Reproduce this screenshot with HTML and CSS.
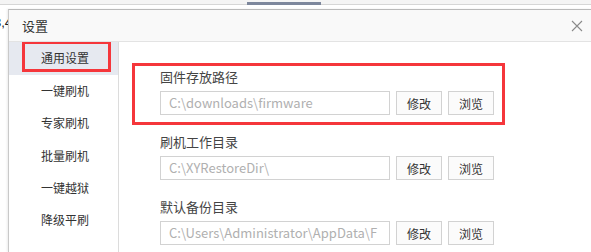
FILE: index.html
```html
<!DOCTYPE html>
<html lang="zh-CN">
<head>
<meta charset="UTF-8">
<title>设置</title>
<link rel="stylesheet" href="styles.css">
</head>
<body>
    <div class="backdrop">
        <div class="backdrop-tab"></div>
    </div>
    <div class="page">
        <div class="gutter"><span class="gutter-text">3,4</span></div>
        <div class="dialog">
            <div class="titlebar">
                <span class="title">设置</span>
                <svg class="close" width="12" height="12" viewBox="0 0 12 12">
                    <path d="M1 1 L11 11 M11 1 L1 11" stroke="#8a8a8a" stroke-width="1.1" fill="none"/>
                </svg>
            </div>
            <div class="dialog-body">
                <ul class="sidebar">
                    <li class="nav-item active">通用设置<span class="mark mark-nav"></span></li>
                    <li class="nav-item">一键刷机</li>
                    <li class="nav-item">专家刷机</li>
                    <li class="nav-item">批量刷机</li>
                    <li class="nav-item">一键越狱</li>
                    <li class="nav-item">降级平刷</li>
                </ul>
                <div class="content">
                    <div class="group">
                        <span class="mark mark-group"></span>
                        <div class="label">固件存放路径</div>
                        <div class="row">
                            <div class="path">C:\downloads\firmware</div>
                            <button class="btn">修改</button>
                            <button class="btn">浏览</button>
                        </div>
                    </div>
                    <div class="group">
                        <div class="label">刷机工作目录</div>
                        <div class="row">
                            <div class="path">C:\XYRestoreDir\</div>
                            <button class="btn">修改</button>
                            <button class="btn">浏览</button>
                        </div>
                    </div>
                    <div class="group">
                        <div class="label">默认备份目录</div>
                        <div class="row">
                            <div class="path">C:\Users\Administrator\AppData\F</div>
                            <button class="btn">修改</button>
                            <button class="btn">浏览</button>
                        </div>
                    </div>
                </div>
            </div>
        </div>
    </div>
</body>
</html>
```

FILE: styles.css
```css
body {
    margin: 0;
    background: white;
    width: 591px;
    height: 252px;
    overflow: hidden;
    font-family: "Noto Sans CJK SC", "Liberation Sans", sans-serif;
    color: #333;
}

.backdrop {
    height: 4px;
    background: #f4f4f4;
    border-bottom: 1px solid #d6d6d6;
    position: relative;
}

.backdrop-tab {
    position: absolute;
    left: 247px;
    top: 2px;
    width: 74px;
    height: 3px;
    background: #7d879c;
}

.page {
    display: flex;
    height: 247px;
}

.gutter {
    width: 8px;
    overflow: hidden;
    background: #fff;
}

.gutter-text {
    display: block;
    margin-top: 10px;
    margin-left: -6px;
    font-size: 13px;
    line-height: 16px;
    color: #222;
    font-family: "Liberation Sans", sans-serif;
}

.dialog {
    flex: 1;
    margin-top: 4px;
    border-left: 1px solid #c9c9c9;
    border-top: 1px solid #b9b9b9;
    box-shadow: -1px 0 2px rgba(0,0,0,0.08);
    background: #fff;
    display: flex;
    flex-direction: column;
    min-height: 0;
}

.titlebar {
    flex-shrink: 0;
    height: 31px;
    background: #f9f9f9;
    border-bottom: 1px solid #e3e3e3;
    display: flex;
    align-items: center;
    justify-content: space-between;
    padding: 0 8px 0 13px;
}

.title {
    font-size: 13px;
}

.close {
    display: block;
}

.dialog-body {
    flex: 1;
    min-height: 0;
    overflow: hidden;
    display: flex;
}

.sidebar {
    list-style: none;
    margin: 0;
    padding: 0;
    width: 109px;
    flex-shrink: 0;
    border-right: 1px solid #dcdcdc;
}

.nav-item {
    position: relative;
    height: 32.3px;
    line-height: 32px;
    padding-left: 32px;
    font-size: 12px;
    color: #333;
}

.nav-item.active {
    height: 33px;
    line-height: 32px;
    background: #e6e9f0;
}

.mark {
    position: absolute;
    border: 3px solid #f5363b;
    box-sizing: border-box;
}

.mark-nav {
    left: 13px;
    top: -1px;
    right: 7px;
    bottom: 3px;
}

.content {
    flex: 1;
    padding: 26px 0 0 41px;
}

.group {
    position: relative;
    width: 334px;
    margin-bottom: 18px;
}

.mark-group {
    left: -28px;
    top: -5px;
    right: -11px;
    bottom: -10px;
}

.label {
    font-size: 13px;
    line-height: 18px;
    color: #444;
    margin-bottom: 5px;
}

.row {
    display: flex;
    gap: 6px;
}

.path {
    width: 230px;
    height: 24px;
    box-sizing: border-box;
    border: 1px solid #d2d2d2;
    padding: 0 0 0 8px;
    font-size: 13px;
    line-height: 22px;
    color: #b0b0b0;
    white-space: nowrap;
    overflow: hidden;
}

.btn {
    width: 46px;
    height: 24px;
    border: 1px solid #d2d2d2;
    background: #fbfbfb;
    font-family: "Noto Sans CJK SC", sans-serif;
    font-size: 12px;
    color: #333;
    padding: 0;
}
```
